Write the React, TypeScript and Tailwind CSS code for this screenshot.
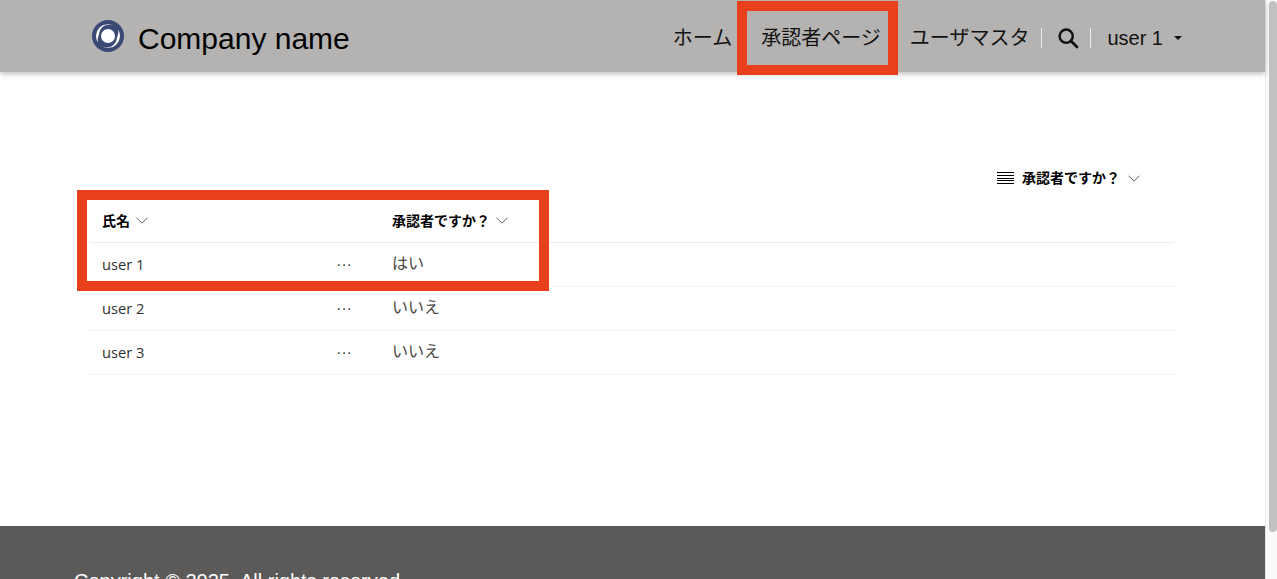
const cjk = 'font-["Liberation_Sans","Noto_Sans_CJK_JP",sans-serif]';

const rows = [
  { name: 'user 1', approver: 'はい' },
  { name: 'user 2', approver: 'いいえ' },
  { name: 'user 3', approver: 'いいえ' },
];

function Chevron({ className }: { className: string }) {
  return (
    <svg viewBox="0 0 12 7" className={className} fill="none" stroke="currentColor" strokeWidth="0.8">
      <path d="M0.5 0.7 6 6.2 11.5 0.7" />
    </svg>
  );
}

function Logo() {
  return (
    <svg viewBox="0 0 32 32" className="h-8 w-8 shrink-0">
      <circle cx="16" cy="16" r="16" fill="#3a4a75" />
      <circle cx="16" cy="16" r="7" fill="#fff" />
      <path d="M6 22.6A12 12 0 0 1 22.6 6 10.4 10.4 0 0 0 7 14.5 12 12 0 0 0 6 22.6Z" fill="#fff" />
      <path d="M26 9.4A12 12 0 0 1 9.4 26 10.4 10.4 0 0 0 25 17.5 12 12 0 0 0 26 9.4Z" fill="#fff" />
    </svg>
  );
}

function SearchIcon() {
  return (
    <svg viewBox="0 0 22 22" className="h-[22px] w-[22px]" fill="none" stroke="#111" strokeWidth="2.5">
      <circle cx="9.2" cy="9.2" r="6.6" />
      <path d="M14 14 20 20" strokeLinecap="round" strokeWidth="2.8" />
    </svg>
  );
}

export default function App() {
  return (
    <div className={`relative flex h-[579px] overflow-hidden bg-white ${cjk}`}>
      <div className="flex w-[1265px] shrink-0 flex-col">
        <header className="z-10 flex h-[72px] shrink-0 items-center justify-between bg-[#b5b3b1] pl-[92px] pr-[83px] shadow-[0_2px_5px_rgba(0,0,0,0.25)]">
          <div className="flex items-center gap-[14px]">
            <Logo />
            <span className="pt-[6px] text-[30px] leading-none text-black">Company name</span>
          </div>
          <nav className="flex items-center pt-[4px] text-[20px] text-[#111]">
            <span>ホーム</span>
            <span className="ml-[29px]">承認者ページ</span>
            <span className="ml-[29px]">ユーザマスタ</span>
            <span className="ml-3 h-5 border-l border-[#eeeeee]" />
            <span className="ml-[15px] -mt-px flex"><SearchIcon /></span>
            <span className="ml-[11px] h-5 border-l border-[#eeeeee]" />
            <span className="ml-4">user 1</span>
            <span className="ml-[11px] h-0 w-0 border-x-[4px] border-t-[4px] border-x-transparent border-t-[#111]" />
          </nav>
        </header>

        <main className="flex-1 px-[90px] pt-[94px]">
          <div className="flex h-6 items-center justify-end pr-[35px] text-[14px] font-bold text-black">
            <span className="flex h-3 w-[17px] flex-col justify-between">
              {[0, 1, 2, 3, 4].map((i) => (
                <span key={i} className="h-px bg-black" />
              ))}
            </span>
            <span className="ml-2">承認者ですか？</span>
            <Chevron className="ml-2 h-[7px] w-3 text-[#333]" />
          </div>

          <div className="mt-[9px] w-[1084px] font-['Open_Sans','Noto_Sans_CJK_JP',sans-serif] text-[#323130]">
            <div className="flex h-[44px] items-center border-b border-[#edebe9] text-[14px] font-bold text-black">
              <div className="flex w-[302px] items-center pl-3">
                <span>氏名</span>
                <Chevron className="ml-[6px] h-[7px] w-3 text-[#333]" />
              </div>
              <div className="flex items-center">
                <span>承認者ですか？</span>
                <Chevron className="ml-[6px] h-[7px] w-3 text-[#333]" />
              </div>
            </div>
            {rows.map((row) => (
              <div key={row.name} className="flex h-[44px] items-center border-b border-[#f3f2f1]">
                <div className="w-[247px] pl-3 text-[14.7px]">{row.name}</div>
                <div className="w-[55px] text-[14px] leading-none tracking-[1.5px]">···</div>
                <div className="pb-[3px] text-[16px] text-[#484644]">{row.approver}</div>
              </div>
            ))}
          </div>
        </main>

        <footer className="h-[53px] shrink-0 overflow-hidden bg-[#5b5a58] pl-[74px] pt-[43px] text-[20px] leading-6 text-white">
          Copyright © 2025. All rights reserved.
        </footer>
      </div>

      <div className="flex-1 border-l border-[#e8e8e8] bg-[#fafafa] pl-[3px] pt-px">
        <div className="h-[531px] w-2 rounded bg-[#c1c1c1]" />
      </div>

      {/* annotations */}
      <div className="absolute left-[737px] top-px z-20 h-[74px] w-[161px] border-[10px] border-[#e9401c]" />
      <div className="absolute left-[77px] top-[190px] z-20 h-[101px] w-[472px] border-[10px] border-[#e9401c]" />
    </div>
  );
}
